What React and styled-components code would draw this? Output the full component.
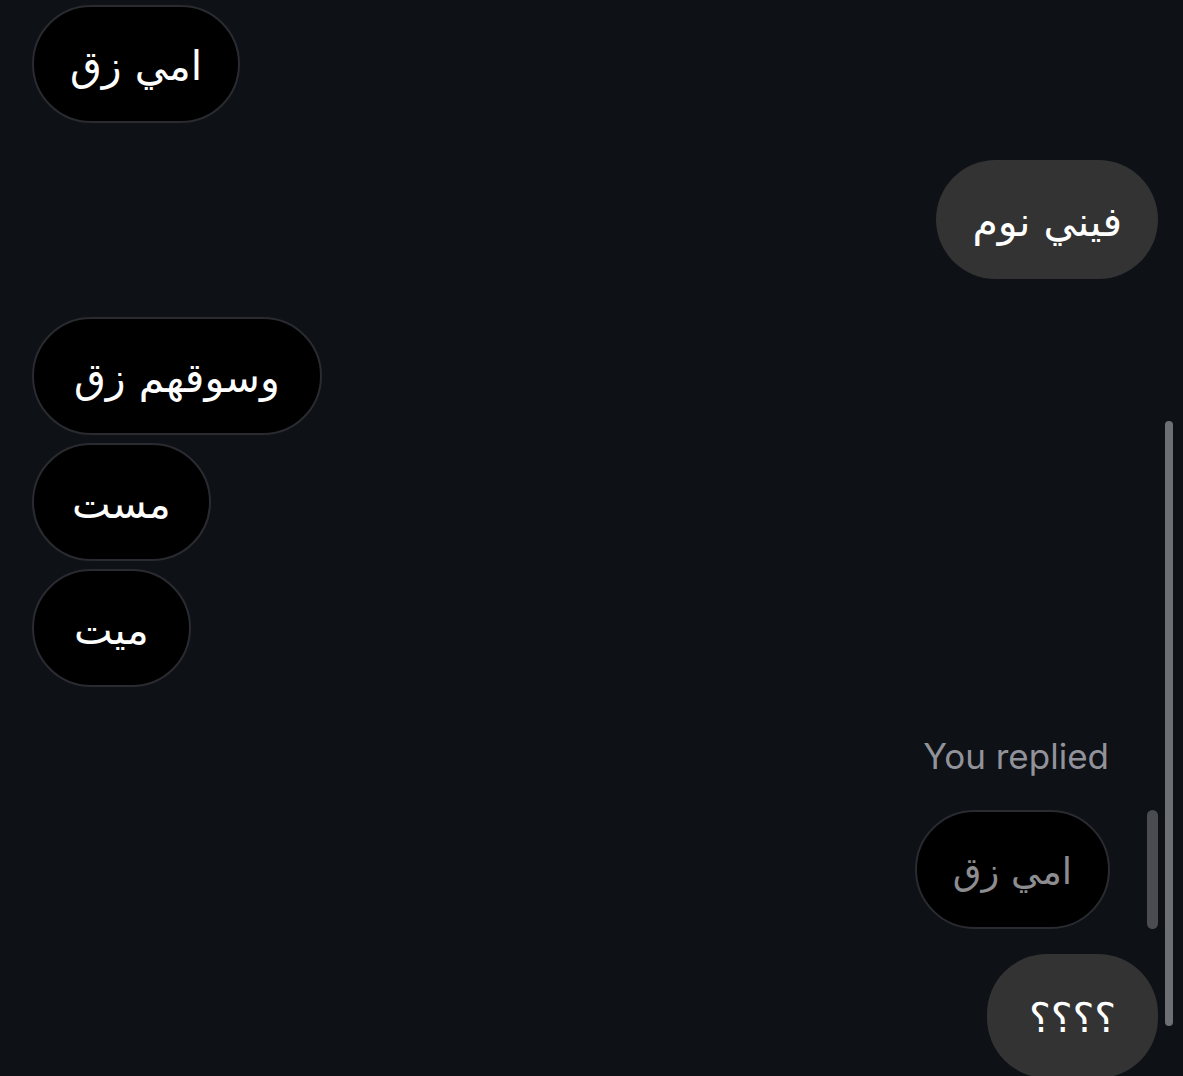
import styled, { createGlobalStyle } from "styled-components"

const GlobalStyle = createGlobalStyle`
  html, body {
    margin: 0;
    padding: 0;
    background: #0e1116;
    font-family: "DejaVu Sans", "Noto Sans", sans-serif;
  }
`

const Screen = styled.div`
  position: relative;
  width: 1183px;
  height: 1076px;
  overflow: hidden;
  background: #0e1116;
`

const Thread = styled.div`
  display: flex;
  flex-direction: column;
  padding: 5px 25px 0 32px;
`

const Row = styled.div`
  display: flex;
  justify-content: ${(p) => (p.$mine ? "flex-end" : "flex-start")};
  margin-top: ${(p) => p.$gap || 0}px;
`

const Bubble = styled.div`
  box-sizing: border-box;
  height: ${(p) => p.$h || 118}px;
  display: flex;
  align-items: center;
  padding: 4px ${(p) => p.$pad || 36}px 0;
  border-radius: 60px;
  font-size: ${(p) => (p.$muted ? 37 : 41)}px;
  color: ${(p) => (p.$muted ? "#8d8d90" : "#ffffff")};
  background: ${(p) => (p.$mine ? "#333333" : "#000000")};
  border: ${(p) => (p.$mine ? "none" : "2.5px solid #2a2b30")};
  white-space: nowrap;
`

const ReplyBlock = styled.div`
  display: flex;
  flex-direction: column;
  align-items: flex-end;
  margin-top: 52px;
`

const ReplyLabel = styled.div`
  font-family: "Inter", "Liberation Sans", sans-serif;
  font-size: 35px;
  color: #92939a;
  padding-right: 49px;
  line-height: 34px;
`

const ReplyRow = styled.div`
  display: flex;
  align-items: stretch;
  gap: 37px;
  margin-top: 37px;
`

const ReplyBar = styled.div`
  width: 11px;
  border-radius: 6px;
  background: #4b4c51;
`

const Scrollbar = styled.div`
  position: absolute;
  right: 10px;
  top: 421px;
  width: 8px;
  height: 605px;
  border-radius: 4px;
  background: #6e6f74;
`

const Message = ({ text, mine, gap, muted, h, pad }) => (
  <Row $mine={mine} $gap={gap}>
    <Bubble $mine={mine} $muted={muted} $h={h} $pad={pad} dir="rtl">
      {text}
    </Bubble>
  </Row>
)

export default function App() {
  return (
    <Screen>
      <GlobalStyle />
      <Thread>
        <Message text="امي زق" />
        <Message text="فيني نوم" mine gap={37} h={119} />
        <Message text="وسوقهم زق" gap={38} pad={40} />
        <Message text="مست" gap={8} pad={38} />
        <Message text="ميت" gap={8} pad={40} />
        <ReplyBlock>
          <ReplyLabel>You replied</ReplyLabel>
          <ReplyRow>
            <Bubble $muted dir="rtl" $h={119}>
              امي زق
            </Bubble>
            <ReplyBar />
          </ReplyRow>
        </ReplyBlock>
        <Message text="؟؟؟؟" mine gap={25} h={124} pad={42} />
      </Thread>
      <Scrollbar />
    </Screen>
  )
}
